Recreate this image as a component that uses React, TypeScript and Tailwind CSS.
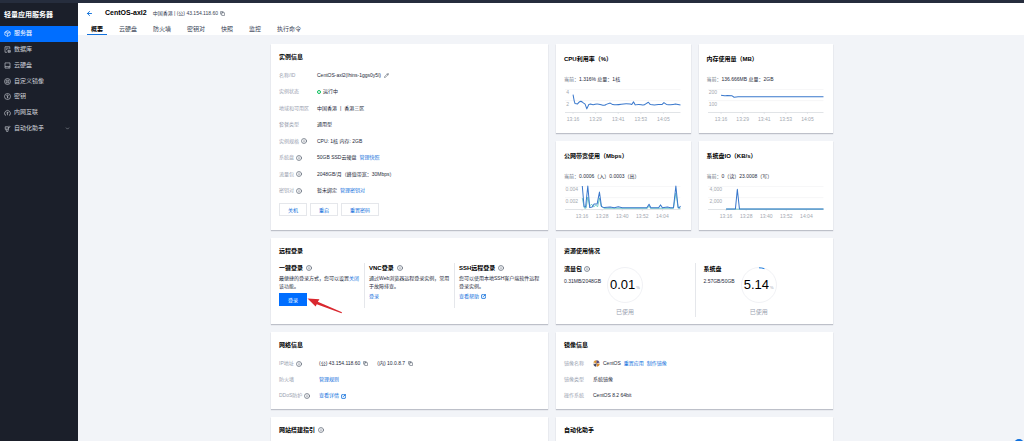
import React from "react";
import { ArrowLeft, ChevronDown, Copy, Info, Pencil, SquareArrowOutUpRight } from "lucide-react";

// 14x14 outlines
const menu = [
  { label: "服务器", icon: "M7 1.2L12.4 4V10L7 12.8L1.6 10V4ZM2 4.5L7 7.2L12 4.5M7 7.2V12.5M4 2.8L9.6 5.8", active: true },
  { label: "数据库", icon: "M11.5 6V1.5H2V12.5H6M4.2 4.4H9.2M4.2 7.2H6.5M8 8.5H12.6V12.6H8ZM8 10.5H12.6" },
  { label: "云硬盘", icon: "M2 1.8H12V12.2H2ZM2 9.2H12M8.8 10.8H10.4" },
  { label: "自定义镜像", icon: "M7 1A6 6 0 1 1 7 13A6 6 0 1 1 7 1M4.4 4.4H9.6V9.6H4.4ZM6.3 7H7.7" },
  { label: "密钥", icon: "M7 1A6 6 0 1 1 7 13A6 6 0 1 1 7 1M7 3.8A1.5 1.5 0 1 1 7 6.8A1.5 1.5 0 1 1 7 3.8M7 6.8V10.6M7 9.2H8.6" },
  { label: "内网互联", icon: "M4 12.3H2.2A5.9 5.9 0 1 1 11.8 12.3H10M7 12.5V6.2M4.9 8.2L7 6.1L9.1 8.2" },
  { label: "自动化助手", icon: "M2.5 3.5H9V8.5H2.5ZM4.5 5.5V6.5M7 5.5V6.5M4 8.5L5 12.8H8L8.5 8.5M9 5.5L12 4M10.5 1.5L12.6 3.8", expandable: true },
];

const tabs = ["概要", "云硬盘", "防火墙", "密钥对", "快照", "监控", "执行命令"];

const InfoIcon = () => <Info className="size-[6px] shrink-0 text-gray-600" strokeWidth={2.5} />;

const CopyButton = () => (
  <button type="button" aria-label="复制" className="text-gray-700">
    <Copy className="size-[5px]" strokeWidth={2.5} />
  </button>
);

const Link = ({ children }: { children: React.ReactNode }) => (
  <a href="#" className="text-[#1070dc] inline-flex items-center gap-0.5">
    {children}
  </a>
);

type CardProps = {
  title: string;
  info?: boolean;
  className?: string;
  children?: React.ReactNode;
};

const Card: React.FC<CardProps> = ({ title, info, className = "pt-2 pb-[5px]", children }) => (
  <section className={`min-w-0 bg-white px-2 shadow-[0_1px_1px_rgba(54,58,80,0.28)] ${className}`}>
    <h2 className="flex items-center gap-[3px] text-[6px] leading-[10px] font-bold text-black">
      {title}
      {info && <InfoIcon />}
    </h2>
    {children}
  </section>
);

type RowProps = { label: string; info?: boolean; labelWidth?: string; children: React.ReactNode };

const Row: React.FC<RowProps> = ({ label, info, labelWidth = "w-[38px]", children }) => (
  <div className="flex items-center">
    <dt className={`flex shrink-0 items-center gap-0.5 text-gray-400 ${labelWidth}`}>
      {label}
      {info && <InfoIcon />}
    </dt>
    <dd className="flex items-center gap-[3px] whitespace-nowrap">{children}</dd>
  </div>
);

const OutlineButton = ({ children }: { children: React.ReactNode }) => (
  <button type="button" className="h-[13px] border border-gray-200 px-2 text-[5px] leading-[8px] text-[#1070dc]">
    {children}
  </button>
);

type ChartProps = {
  title: string;
  current: React.ReactNode;
  yLabels: string[];
  yRight: number;
  xLabels: string[];
  xStart: number;
  xStep: number;
  line: string;
  secondLine?: string;
};

const ChartCard: React.FC<ChartProps> = (props) => {
  const { title, current, yLabels, yRight, xLabels, xStart, xStep, line, secondLine } = props;
  return (
    <Card title={title} className="pt-[10px] pb-[7px]">
      <p className="mt-[10px] leading-[10px] whitespace-nowrap">
        <span className="text-gray-500">当前：</span>
        {current}
      </p>
      <svg viewBox="0 0 118 42" className="block h-auto w-full" role="img" aria-label={title}>
        <path d="M1 5.5H116M1 16.5H116" stroke="#f1f2f4" strokeWidth="0.6" />
        <path d="M1 28.4H116" stroke="#ccd0d6" strokeWidth="0.6" />
        {yLabels.map((label, i) => (
          <text key={label} x={yRight} y={10 + i * 12} textAnchor="end" fontSize="5" fill="#a3a8b0">
            {label}
          </text>
        ))}
        {xLabels.map((label, i) => (
          <g key={label}>
            <path d={`M${xStart + i * xStep} 28.4v1.5`} stroke="#ccd0d6" strokeWidth="0.5" />
            <text x={xStart + i * xStep} y="37" textAnchor="middle" fontSize="5" fill="#a3a8b0">
              {label}
            </text>
          </g>
        ))}
        {secondLine && <path d={secondLine} fill="none" stroke="#3fb7b5" strokeWidth="0.7" />}
        <path d={line} fill="none" stroke="#3a78cc" strokeWidth="1" strokeLinejoin="round" />
      </svg>
    </Card>
  );
};

type UsageProps = { title: string; info?: boolean; amount: string; percent: number };

const Usage: React.FC<UsageProps> = ({ title, info, amount, percent }) => (
  <div className="flex gap-1.5">
    <div>
      <h3 className="mt-px flex items-center gap-0.5 text-[6px] leading-[10px] font-bold text-black">
        {title}
        {info && <InfoIcon />}
      </h3>
      <p className="mt-0.5 leading-[10px]">{amount}</p>
    </div>
    <div className="mt-1 w-9 text-center">
      <div className="relative">
        <svg viewBox="0 0 36 36" className="block size-9 -rotate-90" aria-hidden="true">
          <circle cx="18" cy="18" r="17.5" fill="none" stroke="#eceef1" strokeWidth="0.8" />
          <circle
            cx="18"
            cy="18"
            r="17.2"
            fill="none"
            stroke="#1f7fe0"
            strokeWidth="1"
            pathLength="100"
            strokeDasharray={`${percent < 1 ? 0 : percent} 100`}
          />
        </svg>
        <p className="absolute inset-0 flex items-baseline justify-center gap-px leading-9 text-black">
          <span className="text-[13px]">{percent}</span>
          <span className="text-[4px] text-gray-400">%</span>
        </p>
      </div>
      <p className="mt-1 text-[6px] leading-[10px] text-gray-400">已使用</p>
    </div>
  </div>
);

const Sidebar = () => (
  <aside className="w-[78px] shrink-0 bg-[#1b1f2a] text-gray-300">
    <h1 className="px-1 pt-[6px] pb-[5px] text-[7px] leading-[12px] font-bold whitespace-nowrap text-white">
      轻量应用服务器
    </h1>
    <nav className="flex h-[110px] flex-col text-[6px]">
      {menu.map(({ label, icon, active, expandable }) => (
        <a
          key={label}
          href="#"
          className={`flex flex-1 items-center gap-[3px] pr-2 pl-1 ${active ? "bg-[#006eff] text-white" : ""}`}
        >
          <svg viewBox="0 0 14 14" className="size-[7px]" fill="none" stroke="currentColor" strokeWidth="1.2" aria-hidden="true">
            <path d={icon} />
          </svg>
          {label}
          {expandable && <ChevronDown className="ml-auto size-[5px]" />}
        </a>
      ))}
    </nav>
  </aside>
);

const Header = () => (
  <header className="bg-white pt-1 pl-2">
    <div className="flex items-center leading-[12px]">
      <button type="button" aria-label="返回" className="text-[#0068d8]">
        <ArrowLeft className="size-[7px]" strokeWidth={3} />
      </button>
      <h2 className="ml-3 text-[7px] font-bold text-black">CentOS-axl2</h2>
      <p className="mr-0.5 ml-1.5 text-gray-700">中国香港 | (公) 43.154.118.60</p>
      <CopyButton />
    </div>
    <div role="tablist" className="mt-[5px] flex gap-2 pl-px text-[6px] leading-[10px]">
      {tabs.map((tab, i) => (
        <button
          key={tab}
          type="button"
          role="tab"
          aria-selected={i === 0}
          className={`border-b px-1 ${i === 0 ? "border-[#1070dc] font-bold text-black" : "border-transparent text-gray-700"}`}
        >
          {tab}
        </button>
      ))}
    </div>
  </header>
);

const InstanceCard = () => (
  <Card title="实例信息">
    <dl className="mt-[5px] grid h-[132px] grid-rows-8">
      <Row label="名称/ID">
        CentOS-axl2(lhins-1ggs0y5l)
        <button type="button" aria-label="编辑">
          <Pencil className="size-[5px]" />
        </button>
      </Row>
      <Row label="实例状态">
        <span className="flex items-center gap-0.5">
          <span className="size-1 rounded-full border border-[#0abf5b]" />
          运行中
        </span>
      </Row>
      <Row label="地域和可用区">
        <span>中国香港</span>
        <span>|</span>
        <span>香港三区</span>
      </Row>
      <Row label="套餐类型">通用型</Row>
      <Row label="实例规格" info>
        CPU: 1核 内存: 2GB
      </Row>
      <Row label="系统盘" info>
        50GB SSD云硬盘 <Link>管理快照</Link>
      </Row>
      <Row label="流量包" info>
        2048GB/月（峰值带宽：30Mbps）
      </Row>
      <Row label="密钥对" info>
        暂未绑定 <Link>管理密钥对</Link>
      </Row>
    </dl>
    <div className="mt-1 flex gap-[3px]">
      <OutlineButton>关机</OutlineButton>
      <OutlineButton>重启</OutlineButton>
      <OutlineButton>重置密码</OutlineButton>
    </div>
  </Card>
);

const LoginMethod = ({ title, children }: { title: string; children: React.ReactNode }) => (
  <div className="-ml-[5px] h-[45px] border-l border-gray-200 pl-1 first:ml-0 first:border-0 first:pl-0">
    <h3 className="flex items-center gap-[3px] text-[6px] leading-[10px] font-bold text-black">
      {title}
      <InfoIcon />
    </h3>
    {children}
  </div>
);

const LoginCard = () => (
  <Card title="远程登录" className="pt-2 pb-4">
    <div className="mt-[7px] grid grid-cols-3 gap-[9px] leading-[8px]">
      <LoginMethod title="一键登录">
        <p className="mt-px">
          最便捷的登录方式，您可以设置<Link>关闭</Link>该功能。
        </p>
        <div className="relative mt-[3px] w-7">
          <button type="button" className="block h-[13px] w-full bg-[#006eff] text-[5px] text-white">
            登录
          </button>
          <svg viewBox="0 0 36 18" className="pointer-events-none absolute top-1 left-7 h-[18px] w-9" aria-hidden="true">
            <path d="M0.5 1.5L12.5 2.2L10.8 4.8L35 15.2L34.5 16.2L9.8 7.2L8.6 9.6Z" fill="#d9282f" />
          </svg>
        </div>
      </LoginMethod>
      <LoginMethod title="VNC登录">
        <p className="mt-px mb-0.5">通过Web浏览器远程登录实例，常用于故障排查。</p>
        <Link>登录</Link>
      </LoginMethod>
      <LoginMethod title="SSH远程登录">
        <p className="mt-px mb-0.5">您可以使用本地SSH客户端软件远程登录实例。</p>
        <Link>
          查看帮助 <SquareArrowOutUpRight className="size-[5px]" strokeWidth={4} />
        </Link>
      </LoginMethod>
    </div>
  </Card>
);

const CentosLogo = () => (
  <svg viewBox="0 0 14 14" className="size-[7px]" aria-hidden="true">
    <circle cx="7" cy="7" r="6.5" fill="#e6dcd0" />
    <path d="M7 7L1 4.5A6.5 6.5 0 0 1 7 .5Z" fill="#e0952c" />
    <path d="M7 7V.5A6.5 6.5 0 0 1 13 5Z" fill="#5b4a78" />
    <path d="M7 7L13.4 8A6.5 6.5 0 0 1 8 13.4Z" fill="#d9882a" />
    <path d="M7 7L6 13.4A6.5 6.5 0 0 1 .8 9Z" fill="#3c4568" />
  </svg>
);

const App: React.FC = () => (
  <div className="flex h-screen flex-col overflow-hidden bg-[#f2f4f8] font-['Liberation_Sans','Noto_Sans_CJK_SC',sans-serif] text-[5px] text-gray-800">
    <div className="h-[3px] shrink-0 bg-[#262d3d]" />
    <div className="flex min-h-0 flex-1">
      <Sidebar />
      <div className="min-w-0 flex-1">
        <Header />
        <main className="pt-[9px] pl-0.5">
          <div className="mx-auto grid max-w-[562px] grid-cols-2 gap-2">
            <InstanceCard />
            <div className="grid grid-cols-2 gap-2">
              <ChartCard
                title="CPU利用率（%）"
                current="1.316% 总量：1核"
                yLabels={["4", "2"]}
                yRight={5}
                xLabels={["13:16", "13:29", "13:41", "13:53", "14:05"]}
                xStart={9}
                xStep={22.5}
                line="M9 10.5L10.2 17L11 19.5L13.5 19.8L15 18Q17 16.5 18.5 18.3L21 20L22.7 24.8L24.7 20.5L26.5 20Q29 21 31 20.2T37 20.6T42 20.3L46 19L48.5 20.5Q53 21 57 20.2T66 20L67.5 20.4L69.2 17.8L71 20.8Q74 20 77 20.6T81 20L84 18.2L86 20.5Q90 21.2 94 20.5L97.5 20.5L99.5 18.5L102 20.3Q107 21.2 111 20L116 21"
              />
              <ChartCard
                title="内存使用量（MB）"
                current="136.666MB 总量：2GB"
                yLabels={["200", "100"]}
                yRight={10}
                xLabels={["13:16", "13:29", "13:41", "13:53", "14:05"]}
                xStart={14}
                xStep={21.5}
                line="M14 11.3Q17 12 20 11.5L25 11.8L27 13.2L31 12.8H116"
              />
              <ChartCard
                title="公网带宽使用（Mbps）"
                current="0.0006（入）0.0003（出）"
                yLabels={["0.004", "0.002"]}
                yRight={14}
                xLabels={["13:16", "13:28", "13:40", "13:52", "14:04"]}
                xStart={18}
                xStep={20}
                line="M18.2 5L20 25.5L21.5 26L23.7 5L25.6 26.5L28 26L30 22.8H33L35.3 11L37.3 25.5L40 26.5L46 25.8L50 26.6L54 25.6L58 26.6H82.5L84.7 23.2L86.5 26.6H94.2L96.2 23.8L98 26.6L103 25.8L106 26.6H109L111.4 5L113.6 26.2L114.8 26.6L116 25"
                secondLine="M18.2 17L20.3 27L22 27L23.7 16L25.5 25L27.5 23L29.5 26L31.5 24L33.5 25.5L35.3 17L37 25L40 27.2H83L84.7 25L86 27.2H109L111.4 12L113.8 27.2H116"
              />
              <ChartCard
                title="系统盘IO（KB/s）"
                current="0（读）23.0008（写）"
                yLabels={["4,000", "2,000"]}
                yRight={15}
                xLabels={["13:16", "13:28", "13:40", "13:52", "14:04"]}
                xStart={19}
                xStep={20}
                line="M19 27.8H28.3L30.2 8.3L32.3 27.8H116"
                secondLine="M19 28H116"
              />
            </div>
            <LoginCard />
            <Card title="资源使用情况" className="pt-2 pb-[6px]">
              <div className="mt-[7px] grid grid-cols-2">
                <Usage title="流量包" info amount="0.31MB/2048GB" percent={0.01} />
                <div className="border-l border-gray-200 pl-2">
                  <Usage title="系统盘" amount="2.57GB/50GB" percent={5.14} />
                </div>
              </div>
            </Card>
            <Card title="网络信息">
              <dl className="mt-[5px] grid h-[49px] grid-rows-3">
                <Row label="IP地址" info labelWidth="w-10">
                  (公) 43.154.118.60 <CopyButton />
                  <span className="ml-1.5">(内) 10.0.8.7</span> <CopyButton />
                </Row>
                <Row label="防火墙" labelWidth="w-10">
                  <Link>管理规则</Link>
                </Row>
                <Row label="DDoS防护" info labelWidth="w-10">
                  <Link>
                    查看详情 <SquareArrowOutUpRight className="size-[5px]" strokeWidth={4} />
                  </Link>
                </Row>
              </dl>
            </Card>
            <Card title="镜像信息">
              <dl className="mt-[5px] grid h-[49px] grid-rows-3">
                <Row label="镜像名称" labelWidth="w-[29px]">
                  <CentosLogo /> CentOS <Link>重置应用</Link> <Link>制作镜像</Link>
                </Row>
                <Row label="镜像类型" labelWidth="w-[29px]">
                  系统镜像
                </Row>
                <Row label="操作系统" labelWidth="w-[29px]">
                  CentOS 8.2 64bit
                </Row>
              </dl>
            </Card>
            <Card title="网站搭建指引" info className="pt-2 pb-10" />
            <Card title="自动化助手" className="pt-2 pb-10" />
          </div>
        </main>
      </div>
    </div>
    <button type="button" aria-label="在线咨询" className="fixed right-0 -bottom-2 size-[10px] rounded-full bg-[#1070dc]" />
  </div>
);

export default App;
